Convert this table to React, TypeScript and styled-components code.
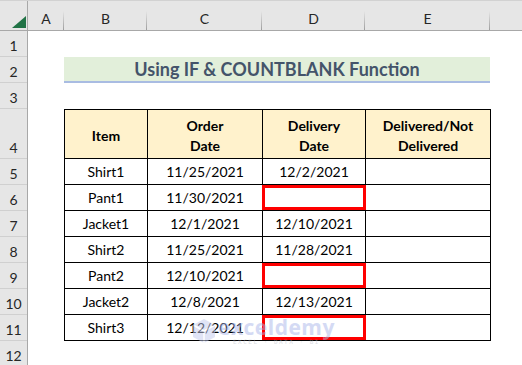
import { styled, createGlobalStyle } from 'styled-components';

const GlobalStyle = createGlobalStyle`
  html, body {
    margin: 0;
    padding: 0;
    background: #fff;
  }
  body {
    font-family: Lato, "Open Sans", sans-serif;
  }
`;

const columns = [
  { label: '', width: 28 },
  { label: 'A', width: 36 },
  { label: 'B', width: 83 },
  { label: 'C', width: 115 },
  { label: 'D', width: 103 },
  { label: 'E', width: 125 },
  { label: '', width: 32 },
];

const rowHeights = [26, 26, 26, 50, 26, 26, 26, 26, 26, 26, 26, 26];

const items = [
  { item: 'Shirt1', order: '11/25/2021', delivery: '12/2/2021' },
  { item: 'Pant1', order: '11/30/2021', delivery: '' },
  { item: 'Jacket1', order: '12/1/2021', delivery: '12/10/2021' },
  { item: 'Shirt2', order: '11/25/2021', delivery: '11/28/2021' },
  { item: 'Pant2', order: '12/10/2021', delivery: '' },
  { item: 'Jacket2', order: '12/8/2021', delivery: '12/13/2021' },
  { item: 'Shirt3', order: '12/12/2021', delivery: '' },
];

const Sheet = styled.div`
  width: 522px;
  height: 365px;
  overflow: hidden;
  position: relative;
  background: #fff;
  color: #000;
`;

const ColumnBar = styled.div`
  display: flex;
  height: 31px;
  background: #e6e6e6;
  border-top: 1px solid #d2d2d2;
  border-bottom: 1px solid #a8a8a8;
  box-sizing: border-box;
`;

const ColumnHead = styled.div<{ $w: number }>`
  position: relative;
  width: ${(p) => p.$w}px;
  flex: none;
  display: flex;
  align-items: flex-end;
  justify-content: center;
  padding-bottom: 3px;
  box-sizing: border-box;
  font-size: 14px;
  color: #262626;

  &:not(:last-child)::after {
    content: '';
    position: absolute;
    right: 0;
    top: 10px;
    bottom: 0;
    width: 1px;
    background: linear-gradient(#e6e6e6, #9e9e9e);
  }
`;

const Corner = styled(ColumnHead)`
  &::before {
    content: '';
    position: absolute;
    right: 2px;
    bottom: 2px;
    width: 0;
    height: 0;
    border-style: solid;
    border-width: 0 0 12px 14px;
    border-color: transparent transparent #217346 transparent;
  }
  &:not(:last-child)::after {
    top: 0;
    background: #a8a8a8;
  }
`;

const Body = styled.div`
  display: flex;
`;

const RowBar = styled.div`
  width: 28px;
  flex: none;
  background: #e6e6e6;
  border-right: 1px solid #a8a8a8;
  box-sizing: border-box;
`;

const RowHead = styled.div<{ $h: number }>`
  height: ${(p) => p.$h}px;
  display: flex;
  align-items: flex-end;
  justify-content: center;
  padding-bottom: 2px;
  box-sizing: border-box;
  border-bottom: 1px solid #d0d0d0;
  font-size: 14px;
  color: #262626;
`;

const Canvas = styled.div`
  padding-left: 36px;
  padding-top: 26px;
  display: flex;
  flex-direction: column;
`;

const Title = styled.div`
  width: 426px;
  height: 26px;
  background: #e2efda;
  border-bottom: 2px solid #a9bce2;
  box-sizing: border-box;
  display: flex;
  align-items: center;
  justify-content: center;
  font-size: 18px;
  font-weight: 700;
  color: #44546a;
  margin-bottom: 26px;
`;

const Table = styled.table`
  border-collapse: collapse;
  table-layout: fixed;
  width: 427px;
  font-size: 14px;
`;

const HeadCell = styled.th<{ $w: number }>`
  width: ${(p) => p.$w}px;
  height: 49px;
  padding: 0;
  background: #fff2cc;
  border: 1px solid #000;
  font-weight: 700;
  line-height: 20px;
  text-align: center;
  vertical-align: middle;
  padding-top: 4px;
  box-sizing: border-box;
`;

const Cell = styled.td`
  position: relative;
  height: 26px;
  padding: 0 0 1px;
  border: 1px solid #000;
  text-align: center;
  vertical-align: bottom;
  line-height: 22px;
  box-sizing: border-box;
`;

const Highlight = styled.span`
  position: absolute;
  left: -1px;
  right: -1px;
  top: 0;
  bottom: 0;
  border: 3px solid #ff0000;
`;

const Watermark = styled.div`
  position: absolute;
  left: 192px;
  top: 317px;
  display: flex;
  align-items: center;
  gap: 2px;
  opacity: 0.5;
  pointer-events: none;
`;

const MarkText = styled.div`
  display: flex;
  flex-direction: column;
  align-items: center;
  line-height: 1;
`;

const MarkName = styled.span`
  font-family: "Open Sans", sans-serif;
  font-size: 21px;
  font-weight: 700;
  color: #aab6ea;
  letter-spacing: 0.5px;
`;

const MarkTag = styled.span`
  font-family: "DejaVu Sans Mono", monospace;
  font-size: 6px;
  color: #b8bcc8;
  letter-spacing: 1.5px;
  margin-top: 1px;
`;

export default function App() {
  return (
    <Sheet>
      <GlobalStyle />
      <ColumnBar>
        {columns.map((c, i) =>
          i === 0 ? (
            <Corner key={i} $w={c.width} />
          ) : (
            <ColumnHead key={i} $w={c.width}>
              {c.label}
            </ColumnHead>
          )
        )}
      </ColumnBar>
      <Body>
        <RowBar>
          {rowHeights.map((h, i) => (
            <RowHead key={i} $h={h}>
              {i + 1}
            </RowHead>
          ))}
        </RowBar>
        <Canvas>
          <Title>Using IF &amp; COUNTBLANK Function</Title>
          <Table>
            <thead>
              <tr>
                <HeadCell $w={83}>Item</HeadCell>
                <HeadCell $w={115}>
                  Order
                  <br />
                  Date
                </HeadCell>
                <HeadCell $w={103}>
                  Delivery
                  <br />
                  Date
                </HeadCell>
                <HeadCell $w={125}>
                  Delivered/Not
                  <br />
                  Delivered
                </HeadCell>
              </tr>
            </thead>
            <tbody>
              {items.map((r) => (
                <tr key={r.item}>
                  <Cell>{r.item}</Cell>
                  <Cell>{r.order}</Cell>
                  <Cell>
                    {r.delivery}
                    {r.delivery === '' && <Highlight />}
                  </Cell>
                  <Cell />
                </tr>
              ))}
            </tbody>
          </Table>
        </Canvas>
      </Body>
      <Watermark>
        <svg width="24" height="26" viewBox="0 0 24 26">
          <path d="M12 1 L23 7 L23 19 L12 25 L1 19 L1 7 Z" fill="#c3cbef" />
          <path d="M12 13 L23 7 M12 13 L1 7 M12 13 L12 25" stroke="#fff" strokeWidth="1.5" />
        </svg>
        <MarkText>
          <MarkName>exceldemy</MarkName>
          <MarkTag>EXCEL · DATA · BI</MarkTag>
        </MarkText>
      </Watermark>
    </Sheet>
  );
}
